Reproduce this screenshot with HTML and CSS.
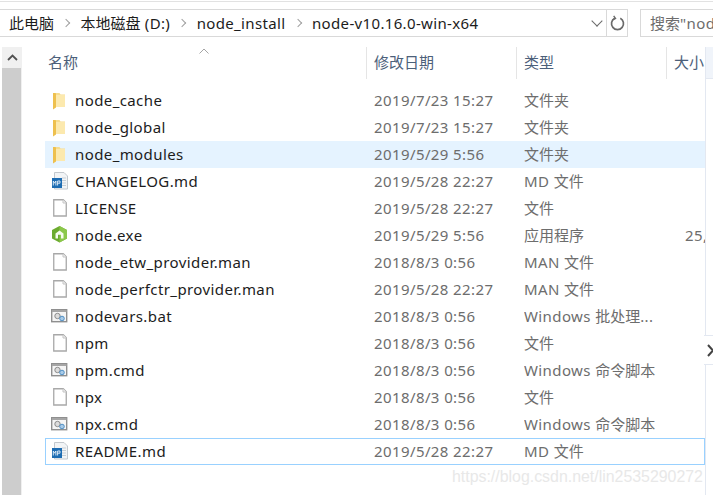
FILE: index.html
```html
<!DOCTYPE html>
<html lang="zh">
<head>
<meta charset="utf-8">
<title>node-v10.16.0-win-x64</title>
<link rel="stylesheet" href="styles.css">
</head>
<body>
<svg class="defs" width="0" height="0" aria-hidden="true">
  <defs>
    <symbol id="i-folder" viewBox="0 0 18 20">
      <path d="M5 2h4.500l1 1.500H15V16H5z" fill="#f7dc8e"/>
      <path d="M5 4h10v12H5z" fill="#fce9ae"/>
      <path d="M3 2h2.500l.5 1v13.500L3 18.500z" fill="#eec04e"/>
    </symbol>
    <symbol id="i-blank" viewBox="0 0 18 20">
      <path d="M3.750 .75h9.500l3 3V17h-12.500z" fill="#fff" stroke="#a8a8a8" stroke-width="1.300"/>
      <path d="M13 .75V4h3.250" fill="#f2f2f2" stroke="#c4c4c4"/>
    </symbol>
    <symbol id="i-md" viewBox="0 0 18 20">
      <path d="M4.500 .5h9.500l3.500 3.500v13h-13z" fill="#f2f4f6" stroke="#c3c8cd"/>
      <path d="M12 6h4M12 8.500h4M12 11h4M12 13.500h4" stroke="#c8ced4"/>
      <rect x="2" y="6" width="10" height="10" fill="#1d6cb2"/>
      <path d="M3.300 13.500v-4.500l1.300 2.200 1.300-2.200v4.500M7.600 13.500V9h2.400v2.200H7.600" fill="none" stroke="#e8f2fa" stroke-width=".9"/>
    </symbol>
    <symbol id="i-node" viewBox="0 0 18 20">
      <path d="M9.500 0l7.500 4v8.500l-7.500 4-7.500-4V4z" fill="#6cab2f"/>
      <path d="M9.500 0l7.500 4v8.500l-7.500 4z" fill="#8cc84b"/>
      <path d="M5.500 12.500V7.500L9.500 4.500l4 3v5h-2.500V8.800H8v3.700z" fill="#f6fbef"/>
    </symbol>
    <symbol id="i-bat" viewBox="0 0 18 20">
      <rect x="1.700" y="2.700" width="15" height="12" fill="#f5f5f5" stroke="#8f8f8f" stroke-width="1.400"/>
      <rect x="2" y="3" width="14.500" height="2" fill="#a6a6a6"/>
      <circle cx="7.500" cy="9" r="2.700" fill="#dcdcdc" stroke="#8c8c8c"/>
      <circle cx="12" cy="11.500" r="2.300" fill="#a9cbe8" stroke="#4f8fc4"/>
    </symbol>
  </defs>
</svg>

<div class="topline"></div>

<header class="toolbar">
  <nav class="address">
    <div class="crumbs">
      <span class="cjk">此电脑</span><i class="sep"></i>
      <span><span class="cjk">本地磁盘</span> (D:)</span><i class="sep"></i>
      <span>node_install</span><i class="sep"></i>
      <span>node-v10.16.0-win-x64</span>
    </div>
    <i class="dropdown"></i>
    <div class="refresh">
      <svg width="15" height="16" viewBox="0 0 15 16"><path d="M10.300 3.300a6 6 0 1 1-5.600 0" fill="none" stroke="#6a6a6a" stroke-width="1.700"/><path d="M3.700 .8l1.800 2.700-2.900 1.300" fill="none" stroke="#6a6a6a" stroke-width="1.400"/></svg>
    </div>
  </nav>
  <div class="search"><span class="cjk">搜索</span>"node-v10.16.0-win-x64"</div>
</header>

<main class="content">
  <aside class="scrollbar">
    <div class="scroll-up"><svg width="11" height="7" viewBox="0 0 11 7"><path d="M1 6l4.500-4.500L10 6" fill="none" stroke="#505050" stroke-width="1.800"/></svg></div>
    <div class="scroll-thumb"></div>
  </aside>

  <section class="list">
    <div class="head">
      <div class="hcell hname">名称<svg class="sort" width="10" height="6" viewBox="0 0 10 6"><path d="M.5 5.500L5 1l4.500 4.500" fill="none" stroke="#a5a5a5"/></svg></div>
      <div class="hcell">修改日期</div>
      <div class="hcell">类型</div>
      <div class="hcell hsize">大小</div>
    </div>

    <div class="rows">
      <div class="row"><div class="name"><svg class="icon"><use href="#i-folder"/></svg>node_cache</div><div class="cell">2019/7/23 15:27</div><div class="cell cjk">文件夹</div><div class="cell"></div></div>
      <div class="row"><div class="name"><svg class="icon"><use href="#i-folder"/></svg>node_global</div><div class="cell">2019/7/23 15:27</div><div class="cell cjk">文件夹</div><div class="cell"></div></div>
      <div class="row hover"><div class="name"><svg class="icon"><use href="#i-folder"/></svg>node_modules</div><div class="cell">2019/5/29 5:56</div><div class="cell cjk">文件夹</div><div class="cell"></div></div>
      <div class="row"><div class="name"><svg class="icon"><use href="#i-md"/></svg>CHANGELOG.md</div><div class="cell">2019/5/28 22:27</div><div class="cell">MD <span class="cjk">文件</span></div><div class="cell"></div></div>
      <div class="row"><div class="name"><svg class="icon"><use href="#i-blank"/></svg>LICENSE</div><div class="cell">2019/5/28 22:27</div><div class="cell cjk">文件</div><div class="cell"></div></div>
      <div class="row"><div class="name"><svg class="icon"><use href="#i-node"/></svg>node.exe</div><div class="cell">2019/5/29 5:56</div><div class="cell cjk">应用程序</div><div class="cell size">25,</div></div>
      <div class="row"><div class="name"><svg class="icon"><use href="#i-blank"/></svg>node_etw_provider.man</div><div class="cell">2018/8/3 0:56</div><div class="cell">MAN <span class="cjk">文件</span></div><div class="cell"></div></div>
      <div class="row"><div class="name"><svg class="icon"><use href="#i-blank"/></svg>node_perfctr_provider.man</div><div class="cell">2019/5/28 22:27</div><div class="cell">MAN <span class="cjk">文件</span></div><div class="cell"></div></div>
      <div class="row"><div class="name"><svg class="icon"><use href="#i-bat"/></svg>nodevars.bat</div><div class="cell">2018/8/3 0:56</div><div class="cell">Windows <span class="cjk">批处理</span>...</div><div class="cell"></div></div>
      <div class="row"><div class="name"><svg class="icon"><use href="#i-blank"/></svg>npm</div><div class="cell">2018/8/3 0:56</div><div class="cell cjk">文件</div><div class="cell"></div></div>
      <div class="row"><div class="name"><svg class="icon"><use href="#i-bat"/></svg>npm.cmd</div><div class="cell">2018/8/3 0:56</div><div class="cell">Windows <span class="cjk">命令脚本</span></div><div class="cell"></div></div>
      <div class="row"><div class="name"><svg class="icon"><use href="#i-blank"/></svg>npx</div><div class="cell">2018/8/3 0:56</div><div class="cell cjk">文件</div><div class="cell"></div></div>
      <div class="row"><div class="name"><svg class="icon"><use href="#i-bat"/></svg>npx.cmd</div><div class="cell">2018/8/3 0:56</div><div class="cell">Windows <span class="cjk">命令脚本</span></div><div class="cell"></div></div>
      <div class="row selected"><div class="name"><svg class="icon"><use href="#i-md"/></svg>README.md</div><div class="cell">2019/5/28 22:27</div><div class="cell">MD <span class="cjk">文件</span></div><div class="cell"></div></div>
    </div>
  </section>

  <aside class="pane">
    <div class="pane-head"></div>
  </aside>
  <div class="pane-tab"><svg width="7" height="13" viewBox="0 0 7 13"><path d="M1 1l5 5.500-5 5.500" fill="none" stroke="#444" stroke-width="2"/></svg></div>
</main>

<div class="watermark">https://blog.csdn.net/lin2535290272</div>
</body>
</html>
```

FILE: styles.css
```css
* { box-sizing: border-box; }

html, body {
  margin: 0;
  height: 495px;
  overflow: hidden;
  background: #fff;
}

body {
  position: relative;
  width: 713px;
  display: flex;
  flex-direction: column;
  font-family: "Noto Sans", "Noto Sans CJK SC", sans-serif;
  font-size: 15px;
  letter-spacing: 0.4px;
  color: #1c1c1c;
}

.cjk { letter-spacing: 0; }

.defs { position: absolute; }

.topline {
  height: 2px;
  margin-top: 1px;
  border-top: 1px solid #e2e2e2;
}

.toolbar {
  display: flex;
  height: 28px;
  margin-top: 6px;
  gap: 12px;
  flex: none;
}

.address {
  width: 628px;
  flex: none;
  display: flex;
  align-items: center;
  border: 1px solid #d9d9d9;
  border-left: 0;
}

.crumbs {
  flex: 1;
  display: flex;
  align-items: center;
  padding-left: 9px;
  gap: 11.25px;
  white-space: nowrap;
  letter-spacing: 0.35px;
  line-height: 26px;
}

.sep {
  width: 6px;
  height: 6px;
  margin-left: -2px;
  border-top: 1.500px solid #a0a0a0;
  border-right: 1.500px solid #a0a0a0;
  transform: rotate(45deg);
}

.dropdown {
  width: 8px;
  height: 8px;
  margin: 0 5px 4px 0;
  border-right: 1.500px solid #6a6a6a;
  border-bottom: 1.500px solid #6a6a6a;
  transform: rotate(45deg);
}

.refresh {
  width: 21px;
  height: 26px;
  display: flex;
  align-items: center;
  justify-content: center;
  border-left: 1px solid #d9d9d9;
}

.search {
  flex: 1;
  min-width: 0;
  overflow: hidden;
  white-space: nowrap;
  padding-left: 9px;
  line-height: 26px;
  border: 1px solid #d9d9d9;
  border-right: 0;
  color: #6d6d6d;
}

.content {
  position: relative;
  flex: 1;
  display: flex;
  margin-top: 10px;
  min-height: 0;
}

.scrollbar {
  width: 20px;
  margin-left: 2px;
  flex: none;
  display: flex;
  flex-direction: column;
  background: #f0f0f0;
}

.scroll-up {
  height: 21px;
  display: flex;
  align-items: center;
  justify-content: center;
}

.scroll-thumb {
  flex: 1;
  background: #cdcdcd;
  margin-right: 1px;
}

.list {
  width: 683px;
  flex: none;
  padding-left: 23px;
}

.head {
  position: relative;
  display: grid;
  grid-template-columns: 322px 150px 150px 1fr;
  height: 32px;
}

.hcell {
  padding-left: 7px;
  border-right: 1px solid #e5e5e5;
  color: #4c607a;
  line-height: 30px;
  letter-spacing: 0;
  white-space: nowrap;
  overflow: hidden;
}

.hname { padding-left: 3px; }
.hsize { border-right: 0; }

.sort {
  position: absolute;
  left: 154px;
  top: 1px;
}

.rows {
  padding-top: 8px;
}

.row {
  display: grid;
  grid-template-columns: 329px 150px 150px 1fr;
  height: 27px;
  line-height: 27px;
  white-space: nowrap;
}

.hover { background: #e5f3ff; }

.selected {
  outline: 1px solid #99d1ff;
  outline-offset: -1px;
}

.name {
  display: flex;
  align-items: center;
  padding-left: 5px;
  color: #1c1c1c;
  overflow: hidden;
}

.icon {
  width: 18px;
  height: 20px;
  flex: none;
  margin-right: 7px;
}

.cell {
  color: #6d6d6d;
  overflow: hidden;
}

.size { padding-left: 11px; }

.pane {
  flex: 1;
  border-left: 1px solid #e3e8f1;
}

.pane-head {
  height: 32px;
  background: #f0f4fa;
  border-bottom: 1px solid #e3e8f1;
}

.pane-tab {
  position: absolute;
  left: 704px;
  top: 288px;
  width: 9px;
  height: 30px;
  display: flex;
  align-items: center;
  padding-left: 3px;
  background: #fff;
  border-top: 1px solid #e3e8f1;
  border-bottom: 1px solid #e3e8f1;
}

.pane-tab svg { flex: none; }

.watermark {
  position: absolute;
  left: 452px;
  top: 467px;
  font-family: "Liberation Sans", sans-serif;
  font-size: 15.9px;
  letter-spacing: 0;
  line-height: 20px;
  color: #e8e8e8;
  white-space: nowrap;
}
```
